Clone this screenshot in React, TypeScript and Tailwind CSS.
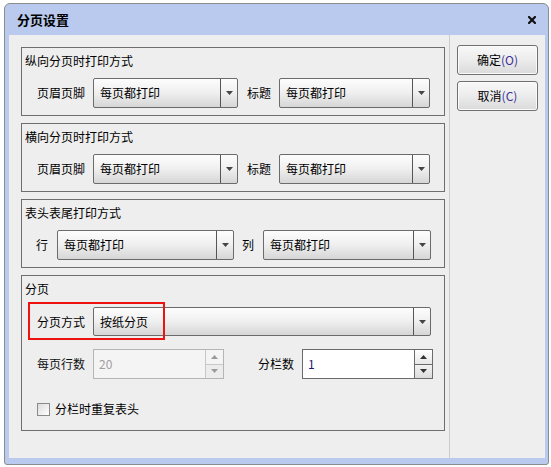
import React from "react";

const font = { fontFamily: '"Noto Sans CJK SC", "Liberation Sans", sans-serif' };

function Arrow({ up = false, color = "#444" }: { up?: boolean; color?: string }) {
  return (
    <svg width="7" height="4" viewBox="0 0 7 4">
      {up ? <polygon points="0,4 7,4 3.5,0" fill={color} /> : <polygon points="0,0 7,0 3.5,4" fill={color} />}
    </svg>
  );
}

function Combo({ w, text, h = "h-[30px]" }: { w: string; text: string; h?: string }) {
  return (
    <div
      className={`${w} ${h} flex items-stretch rounded-[2px] border border-[#6b6b6b] bg-gradient-to-b from-[#fdfdfd] via-[#efefef] to-[#d6d6d6]`}
    >
      <div className="flex flex-1 items-center pl-[6px] text-[12px] text-black">{text}</div>
      <div className="flex w-[17px] items-center justify-center border-l border-[#555]">
        <Arrow />
      </div>
    </div>
  );
}

function Spin({ value, disabled = false }: { value: string; disabled?: boolean }) {
  return (
    <div
      className={`flex h-[30px] w-[131px] border ${
        disabled ? "border-[#b5b5b5] bg-[#f4f4f4]" : "border-[#6b6b6b] bg-white"
      }`}
    >
      <div
        className={`flex flex-1 items-center pl-[5px] text-[12px] ${disabled ? "text-[#a0a0a0]" : "text-[#1a1a6a]"}`}
      >
        {value}
      </div>
      <div className={`flex w-[18px] flex-col border-l ${disabled ? "border-[#c8c8c8]" : "border-[#6b6b6b]"}`}>
        <div
          className={`flex flex-1 items-center justify-center border-b ${
            disabled ? "border-[#c8c8c8] bg-[#f4f4f4]" : "border-[#6b6b6b] bg-gradient-to-b from-white to-[#e8e8e8]"
          }`}
        >
          <Arrow up color={disabled ? "#9a9a9a" : "#333"} />
        </div>
        <div
          className={`flex flex-1 items-center justify-center ${
            disabled ? "bg-[#ececec]" : "bg-gradient-to-b from-[#f2f2f2] to-[#dcdcdc]"
          }`}
        >
          <Arrow color={disabled ? "#9a9a9a" : "#333"} />
        </div>
      </div>
    </div>
  );
}

function Group({ title, h, children }: { title: string; h: string; children: React.ReactNode }) {
  return (
    <div className={`${h} border border-[#6e6e6e]`}>
      <div className="pl-[3px] pt-[5px] text-[12px] leading-[16px] text-black">{title}</div>
      {children}
    </div>
  );
}

function Btn({ label, key2 }: { label: string; key2: string }) {
  return (
    <div className="flex h-[30px] w-[81px] items-center justify-center rounded-[3px] border border-[#707070] bg-gradient-to-b from-[#f8f8f8] via-[#ececec] to-[#dadada] text-[12px] text-black shadow-[inset_0_0_0_1px_#fbfbfb]">
      {label}
      <span className="text-[#3a3096]">{key2}</span>
    </div>
  );
}

export default function App() {
  return (
    <div className="h-[467px] w-[551px] bg-white pl-[4px] pt-[3px]" style={font}>
      <div className="flex h-[462px] w-[545px] flex-col rounded-t-[6px] rounded-b-[3px] border border-[#8c8c8c] bg-[#b9caee] pb-[6px] pl-[4px] pr-[3px]">
        <div className="flex h-[31px] items-center justify-between pl-[8px] pr-[9px]">
          <span className="text-[13px] font-bold text-black">分页设置</span>
          <svg width="8" height="8" viewBox="0 0 8 8">
            <path d="M1 1 L7 7 M7 1 L1 7" stroke="#111" strokeWidth="2.2" strokeLinecap="square" />
          </svg>
        </div>
        <div className="flex flex-1 bg-[#eeeeee]">
          <div className="flex w-[441px] flex-col gap-[7px] border-r border-[#c9cfcf] pl-[12px] pr-[4px] pt-[12px]">
            <Group title="纵向分页时打印方式" h="h-[69px]">
              <div className="mt-[9px] flex items-center pl-[15px] text-[12px]">
                <span className="w-[48px]">页眉页脚</span>
                <div className="ml-[8px]">
                  <Combo w="w-[145px]" text="每页都打印" />
                </div>
                <span className="ml-[9px] w-[24px]">标题</span>
                <div className="ml-[8px]">
                  <Combo w="w-[151px]" text="每页都打印" />
                </div>
              </div>
            </Group>
            <Group title="横向分页时打印方式" h="h-[69px]">
              <div className="mt-[9px] flex items-center pl-[15px] text-[12px]">
                <span className="w-[48px]">页眉页脚</span>
                <div className="ml-[8px]">
                  <Combo w="w-[145px]" text="每页都打印" />
                </div>
                <span className="ml-[9px] w-[24px]">标题</span>
                <div className="ml-[8px]">
                  <Combo w="w-[151px]" text="每页都打印" />
                </div>
              </div>
            </Group>
            <Group title="表头表尾打印方式" h="h-[69px]">
              <div className="mt-[9px] flex items-center pl-[14px] text-[12px]">
                <span className="w-[12px]">行</span>
                <div className="ml-[9px]">
                  <Combo w="w-[177px]" text="每页都打印" />
                </div>
                <span className="ml-[8px] w-[12px]">列</span>
                <div className="ml-[9px]">
                  <Combo w="w-[168px]" text="每页都打印" />
                </div>
              </div>
            </Group>
            <Group title="分页" h="h-[156px]">
              <div className="relative mt-[10px] flex items-center pl-[15px] text-[12px]">
                <span className="w-[48px]">分页方式</span>
                <div className="ml-[8px]">
                  <Combo w="w-[338px]" text="按纸分页" h="h-[29px]" />
                </div>
                <div className="pointer-events-none absolute left-[6px] top-[-5px] h-[38px] w-[137px] border-2 border-[#ee1111]" />
              </div>
              <div className="mt-[13px] flex items-center pl-[15px] text-[12px]">
                <span className="w-[48px] text-[#111]">每页行数</span>
                <div className="ml-[8px]">
                  <Spin value="20" disabled />
                </div>
                <span className="ml-[34px] w-[36px]">分栏数</span>
                <div className="ml-[8px]">
                  <Spin value="1" />
                </div>
              </div>
              <div className="mt-[21px] flex items-center pl-[15px] text-[12px]">
                <div className="h-[13px] w-[13px] border border-[#8a8a8a] bg-gradient-to-br from-[#dcdcdc] to-white" />
                <span className="ml-[5px]">分栏时重复表头</span>
              </div>
            </Group>
          </div>
          <div className="flex flex-1 flex-col gap-[6px] pl-[7px] pt-[10px]">
            <Btn label="确定" key2="(O)" />
            <Btn label="取消" key2="(C)" />
          </div>
        </div>
      </div>
    </div>
  );
}
